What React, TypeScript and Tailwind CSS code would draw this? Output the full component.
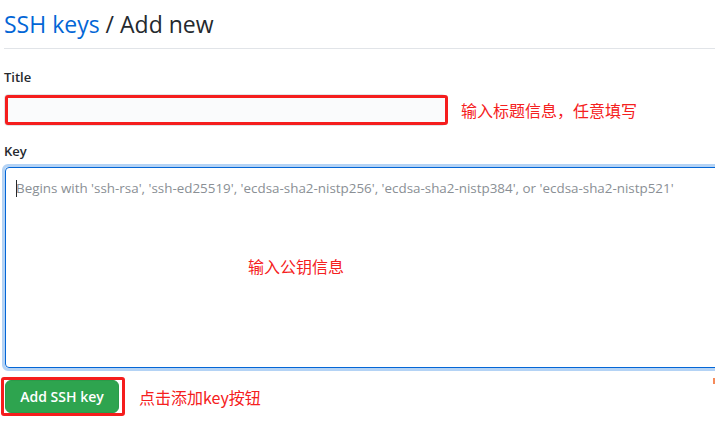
import React from "react";

export default function App() {
  const font = { fontFamily: '"Open Sans", "Noto Sans", "Liberation Sans", sans-serif' };
  const cjk = { fontFamily: '"Noto Sans CJK SC", "Noto Sans", sans-serif' };
  return (
    <div className="w-[715px] h-[426px] overflow-hidden bg-white relative" style={font}>
      <div className="pl-[4px]">
        <div className="h-[49px] border-b border-[#e1e4e8] flex items-start pt-[8px]">
          <h1 className="text-[23px] leading-[32px] text-[#24292e] font-normal">
            <span className="text-[#0366d6]">SSH keys</span> / Add new
          </h1>
        </div>
        <div className="pt-[19px] text-[13px] leading-[18px] font-semibold text-[#24292e]">Title</div>
        <div className="mt-[8px] flex items-center">
          <div className="relative w-[442px] h-[32px]">
            <div className="absolute inset-0 bg-[#fafbfc] border border-[#e1e4e8] rounded-[4px]" />
            <div className="absolute left-[1px] top-[1px] w-[443px] h-[30px] border-[3px] border-[#f51d1d] rounded-[3px]" />
          </div>
          <span className="ml-[15px] text-[16px] text-[#f52020]" style={cjk}>输入标题信息，任意填写</span>
        </div>
        <div className="pt-[16px] text-[13px] leading-[18px] font-semibold text-[#24292e]">Key</div>
        <div className="mt-[4px] ml-[-2px] w-[740px] h-[207px] rounded-[6px] border-[3px] border-[#b4d3f5]">
          <div className="relative w-full h-full border border-[#0366d6] rounded-[4px] bg-white">
            <div className="absolute left-[10px] top-[12px] w-[1px] h-[17px] bg-[#24292e]" />
            <div className="pl-[10px] pt-[10px] text-[13.4px] leading-[20px] text-[#8a8f95] whitespace-nowrap">
              Begins with 'ssh-rsa', 'ssh-ed25519', 'ecdsa-sha2-nistp256', 'ecdsa-sha2-nistp384', or 'ecdsa-sha2-nistp521'
            </div>
            <div className="pl-[242px] pt-[56px] text-[16px] text-[#f52020]" style={cjk}>输入公钥信息</div>
          </div>
        </div>
        <div className="mt-[6px] ml-[-3px] flex items-center">
          <div className="w-[124px] h-[39px] border-[3px] border-[#f51d1d] rounded-[3px] pl-[1px] pt-[0px]">
            <div className="w-[114px] h-[33px] bg-[#2ea44f] rounded-[6px] border border-[#2a9b4a] flex items-center justify-center text-white text-[14px] font-semibold">
              Add SSH key
            </div>
          </div>
          <span className="ml-[14px] text-[16px] text-[#f52020]" style={cjk}>点击添加key按钮</span>
        </div>
      </div>
      <div className="absolute right-0 top-[378px] w-[2px] h-[6px] bg-[#f58a5a]" />
    </div>
  );
}
